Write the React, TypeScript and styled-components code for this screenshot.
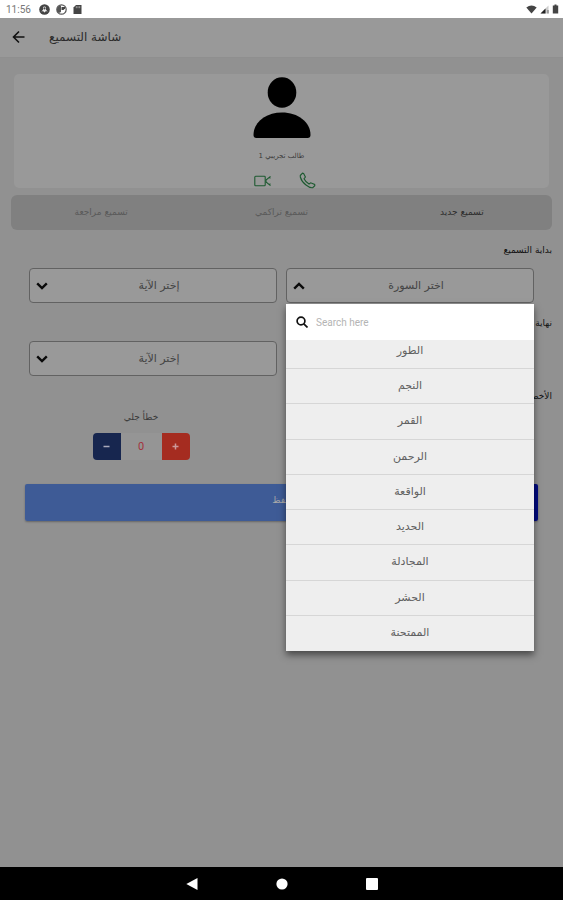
import React, { useState } from "react";
import styled, { createGlobalStyle } from "styled-components";

const GlobalStyle = createGlobalStyle`
  * { box-sizing: border-box; }
  body { margin: 0; background: #919191; }
  button, input { font: inherit; color: inherit; border: 0; margin: 0; padding: 0; background: none; }
  button { cursor: pointer; }
  svg { display: block; flex: none; }
`;

const Screen = styled.div`
  display: flex;
  flex-direction: column;
  min-height: 100vh;
  font-family: "DejaVu Sans", sans-serif;
  font-size: 11px;
  color: #3a3a3a;
  background: #919191;
`;

const StatusBar = styled.div`
  display: flex;
  align-items: center;
  gap: 6px;
  height: 18px;
  padding: 0 4px 0 6px;
  background: #fff;
  color: #777;
  font-family: Roboto, sans-serif;
  font-size: 10px;
`;

const Clock = styled.span`
  width: 27px;
`;

const Signals = styled.div`
  display: flex;
  align-items: center;
  gap: 3px;
  margin-left: auto;
`;

const Header = styled.header`
  display: flex;
  align-items: center;
  gap: 23px;
  height: 40px;
  padding: 0 11px 2px;
  background: #999;
  border-bottom: 1px solid #8f8f8f;
`;

const Title = styled.h1`
  margin: 0;
  font-size: 12px;
  line-height: 16px;
  font-weight: 400;
  color: #2b2b2b;
`;

const Profile = styled.section`
  display: flex;
  flex-direction: column;
  align-items: center;
  height: 114px;
  margin: 16px 14px 7px;
  padding-top: 3px;
  border-radius: 5px;
  background: #999;
`;

const StudentName = styled.p`
  margin: 11px 0 10px;
  font-size: 7px;
  line-height: 12px;
`;

const Contacts = styled.div`
  display: flex;
  gap: 28px;
  padding-left: 7px;
  direction: ltr;
  color: #1d5a30;
`;

const Tabs = styled.div`
  display: grid;
  grid-template-columns: repeat(3, 1fr);
  height: 35px;
  margin: 0 11px;
  border-radius: 6px;
  background: #808080;
`;

const Tab = styled.button<{ $active?: boolean }>`
  padding-bottom: 2px;
  font-size: 9px;
  color: ${(p) => (p.$active ? "#2e2e2e" : "#5a5a5a")};
`;

const SectionLabel = styled.h2`
  margin: 0 11px;
  height: 38px;
  font-size: 9px;
  line-height: 40px;
  font-weight: 400;
  color: #111;
`;

const FieldRow = styled.div`
  display: grid;
  grid-template-columns: 1fr 1fr;
  gap: 9px;
  padding: 0 29px;
`;

const Field = styled.div`
  position: relative;
  grid-column: 1;
`;

const EndField = styled(Field)`
  grid-column: 2;
`;

const SelectButton = styled.button`
  display: flex;
  flex-direction: row-reverse;
  align-items: center;
  width: 100%;
  height: 35px;
  padding: 0 6px;
  border: 1px solid #626262;
  border-radius: 4px;
  background: #999;
  color: #444;
`;

const SelectText = styled.span`
  flex: 1;
`;

const Popup = styled.div`
  position: absolute;
  z-index: 2;
  top: 100%;
  left: 0;
  right: 0;
  margin-top: 1px;
  background: #fff;
  box-shadow: 0 4px 7px rgba(0, 0, 0, 0.5);
`;

const SearchBox = styled.label`
  display: flex;
  align-items: center;
  gap: 8px;
  height: 36px;
  padding: 0 10px;
  direction: ltr;
  font-family: Roboto, sans-serif;
  font-size: 10px;

  input {
    flex: 1;
    min-width: 0;
    outline: 0;
  }
  input::placeholder {
    color: #b4b4b4;
    opacity: 1;
  }
`;

const Options = styled.ul`
  display: grid;
  grid-template-rows: 29px repeat(8, 1fr);
  height: 311px;
  margin: 0;
  padding: 0;
  overflow: hidden;
  list-style: none;
  background: #eee;
`;

const Option = styled.li`
  display: grid;
  border-bottom: 1px solid #d6d6d6;

  &:first-child {
    align-self: end;
    height: 35px;
  }
  &:last-child {
    border-bottom: 0;
  }
  button {
    padding-bottom: 1px;
    color: #606060;
  }
`;

const Counter = styled.div`
  grid-column: 2;
  display: flex;
  flex-direction: column;
  align-items: center;
  padding-right: 24px;
`;

const CounterLabel = styled.span`
  font-size: 9px;
  line-height: 16px;
  margin: -5px 0 8px;
`;

const Stepper = styled.div`
  display: grid;
  grid-template-columns: 28px 41px 28px;
  height: 27px;
  border-radius: 4px;
  overflow: hidden;
  font-family: Roboto, sans-serif;
  line-height: 27px;
  text-align: center;
`;

const Step = styled.button<{ $tone: string }>`
  display: grid;
  place-items: center;
  background: ${(p) => p.$tone};
`;

const Count = styled.output`
  background: #959595;
  color: #a3323c;
`;

const SaveButton = styled.button`
  display: block;
  height: 37px;
  margin: 24px 25px 0;
  padding-bottom: 5px;
  border-radius: 2px;
  font-size: 9px;
  color: #aaa;
  background: linear-gradient(90deg, #3e5b96 0 52%, #000a80 96%);
  box-shadow: 0 1px 2px rgba(0, 0, 0, 0.3);
`;

const Form = styled.main`
  display: flex;
  flex-direction: column;
  flex: 1;
`;

const NavBar = styled.nav`
  display: flex;
  align-items: center;
  justify-content: center;
  gap: 68px;
  height: 33px;
  background: #000;
  color: #fff;

  button {
    display: grid;
    place-items: center;
    width: 22px;
    height: 22px;
  }
`;

const Chevron = ({ up }: { up?: boolean }) => (
  <svg width="12" height="8" viewBox="0 0 12 8" fill="none" stroke="#0a0a0a" strokeWidth="2.4">
    <path d={up ? "M1.2 6.6 6 2l4.8 4.6" : "M1.2 1.4 6 6l4.8-4.6"} />
  </svg>
);

const surahs = ["الطور", "النجم", "القمر", "الرحمن", "الواقعة", "الحديد", "المجادلة", "الحشر", "الممتحنة"];
const tabs = ["تسميع جديد", "تسميع تراكمي", "تسميع مراجعة"];

export default function App() {
  const [tab, setTab] = useState(0);
  const [errors, setErrors] = useState(0);
  const [open, setOpen] = useState(true);
  const [surah, setSurah] = useState("اختر السورة");
  const [query, setQuery] = useState("");

  return (
    <Screen>
      <GlobalStyle />
      <StatusBar>
        <Clock>11:56</Clock>
        <svg width="11" height="11" viewBox="0 0 11 11">
          <circle cx="5.5" cy="5.5" r="5.3" fill="#444" />
          <path d="M2.3 7.8 4 5.7V3.6a1.6 1.6 0 0 1 3 0v2.1l1.7 2.1L7 7.1 5.5 8.6 4 7.1Z" fill="#eee" />
          <circle cx="5.5" cy="4.4" r="1.1" fill="#444" />
        </svg>
        <svg width="11" height="11" viewBox="0 0 11 11">
          <circle cx="5.5" cy="5.5" r="4.7" fill="#fff" stroke="#555" strokeWidth="1.2" />
          <path d="M5 1.5A4 4 0 0 0 3 9l2-1Z" fill="#555" />
          <path d="M5.5 3H9v1.5L7.5 6H5.5Z" fill="#444" />
        </svg>
        <svg width="9" height="11" viewBox="0 0 9 11">
          <path d="M3 1h5.5v9H.5V3.5Z" fill="#444" />
          <path d="M3.3 2.2v2M5 2.2v2M6.7 2.2v2" stroke="#bbb" strokeWidth=".8" />
        </svg>
        <Signals>
          <svg width="11" height="9" viewBox="0 0 11 9">
            <path d="M.3 2.4Q5.5-1.6 10.7 2.4L5.5 8.6Z" fill="#444" />
          </svg>
          <svg width="9" height="9" viewBox="0 0 9 9">
            <path d="M8.5.5v8h-8Z" fill="#ccc" />
            <path d="M5.5 3.5v5h-5Z" fill="#222" />
            <path d="M8 5v3.5" stroke="#666" />
          </svg>
          <svg width="7" height="10" viewBox="0 0 7 10">
            <path d="M2.5.5h2v1h1.7v8H.8v-8h1.7Z" fill="#444" />
          </svg>
        </Signals>
      </StatusBar>

      <Header>
        <button aria-label="رجوع">
          <svg width="15" height="14" viewBox="0 0 15 14" fill="none" stroke="#111" strokeWidth="1.6">
            <path d="M13.5 7H3M8 1.5 2.5 7 8 12.5" />
          </svg>
        </button>
        <Title dir="rtl">شاشة التسميع</Title>
      </Header>

      <Form dir="rtl">
        <Profile>
          <svg width="58" height="62" viewBox="0 0 58 62" fill="#000">
            <ellipse cx="29" cy="15.5" rx="14.3" ry="15.3" />
            <path d="M.5 58C.5 45 13 35.5 29 35.5S57.5 45 57.5 58q0 3-3 3h-51q-3 0-3-3Z" />
          </svg>
          <StudentName>طالب تجريبي 1</StudentName>
          <Contacts>
            <button aria-label="مكالمة فيديو">
              <svg width="17" height="12" viewBox="0 0 17 12" fill="none" stroke="currentColor" strokeWidth="1.1">
                <rect x=".8" y="1.3" width="10.4" height="9.4" rx=".8" />
                <path d="M16.5 1.3 12 5v2l4.5 3.7M16 2.5v1M16 8.5v1" />
              </svg>
            </button>
            <button aria-label="اتصال">
              <svg width="17" height="17" viewBox="0 0 17 17" fill="none" stroke="currentColor" strokeWidth="1.1">
                <path d="M1.3 3.5 3.5 1.2 4.6 1.5 6.4 5 5 6.8Q6.500 10 10 12L11.7 10.8 15.7 12.5 15.8 13.7 13.7 15.7Q11 16.2 7 13 2.500 9.500 1.3 5Z" />
              </svg>
            </button>
          </Contacts>
        </Profile>

        <Tabs role="tablist">
          {tabs.map((name, i) => (
            <Tab key={name} role="tab" aria-selected={tab === i} $active={tab === i} onClick={() => setTab(i)}>
              {name}
            </Tab>
          ))}
        </Tabs>

        <SectionLabel>بداية التسميع</SectionLabel>
        <FieldRow>
          <Field>
            <SelectButton aria-expanded={open} onClick={() => setOpen(!open)}>
              <Chevron up={open} />
              <SelectText>{surah}</SelectText>
            </SelectButton>
            {open && (
              <Popup>
                <SearchBox>
                  <svg width="12" height="12" viewBox="0 0 12 12" fill="none" stroke="#111" strokeWidth="1.7">
                    <circle cx="5" cy="5" r="3.9" />
                    <path d="m7.8 7.8 3.7 3.7" />
                  </svg>
                  <input
                    aria-label="Search here"
                    placeholder="Search here"
                    value={query}
                    onChange={(e) => setQuery(e.target.value)}
                  />
                </SearchBox>
                <Options>
                  {surahs
                    .filter((name) => name.includes(query))
                    .map((name) => (
                      <Option key={name}>
                        <button
                          onClick={() => {
                            setSurah(name);
                            setOpen(false);
                          }}
                        >
                          {name}
                        </button>
                      </Option>
                    ))}
                </Options>
              </Popup>
            )}
          </Field>
          <EndField>
            <SelectButton>
              <Chevron />
              <SelectText>إختر الآية</SelectText>
            </SelectButton>
          </EndField>
        </FieldRow>

        <SectionLabel>نهاية التسميع</SectionLabel>
        <FieldRow>
          <EndField>
            <SelectButton>
              <Chevron />
              <SelectText>إختر الآية</SelectText>
            </SelectButton>
          </EndField>
        </FieldRow>

        <SectionLabel>الأخطاء</SectionLabel>
        <FieldRow>
          <Counter>
            <CounterLabel id="errors-label">خطأ جلي</CounterLabel>
            <Stepper role="group" aria-labelledby="errors-label">
              <Step $tone="#a52c20" aria-label="زيادة" onClick={() => setErrors(errors + 1)}>
                <svg width="7" height="7" viewBox="0 0 7 7" stroke="#c99" strokeWidth="1.5">
                  <path d="M.5 3.5h6M3.5.5v6" />
                </svg>
              </Step>
              <Count>{errors}</Count>
              <Step $tone="#17264f" aria-label="إنقاص" onClick={() => setErrors(Math.max(0, errors - 1))}>
                <svg width="7" height="7" viewBox="0 0 7 7" stroke="#aab" strokeWidth="1.5">
                  <path d="M.5 3.5h6" />
                </svg>
              </Step>
            </Stepper>
          </Counter>
        </FieldRow>
        <SaveButton>حفظ</SaveButton>
      </Form>

      <NavBar>
        <button aria-label="Back">
          <svg width="12" height="12" viewBox="0 0 12 12" fill="currentColor">
            <path d="M11.5 0v12L.3 6Z" />
          </svg>
        </button>
        <button aria-label="Home">
          <svg width="12" height="12" viewBox="0 0 12 12" fill="currentColor">
            <circle cx="6" cy="6" r="5.6" />
          </svg>
        </button>
        <button aria-label="Recents">
          <svg width="12" height="12" viewBox="0 0 12 12" fill="currentColor">
            <rect width="12" height="12" rx="1" />
          </svg>
        </button>
      </NavBar>
    </Screen>
  );
}
